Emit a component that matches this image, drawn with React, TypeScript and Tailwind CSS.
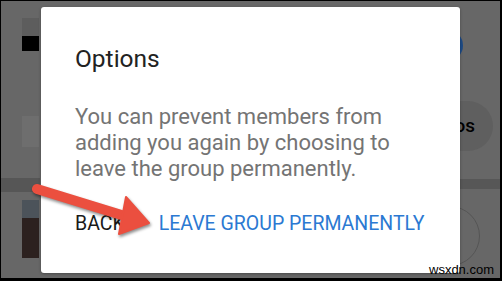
import React from "react";

const Arrow = () => {
  return (
    <svg
      className="absolute left-0 top-0 pointer-events-none"
      width={502}
      height={281}
      viewBox="0 0 502 281"
      style={{ filter: "drop-shadow(1px 2px 1.5px rgba(0,0,0,0.45))" }}
    >
      <line
        x1={37}
        y1={189}
        x2={128}
        y2={217}
        stroke="#eb4f3f"
        strokeWidth={10}
        strokeLinecap="round"
      />
      <polygon points="126,197 149,223 119,234" fill="#eb4f3f" strokeLinejoin="round" stroke="#eb4f3f" strokeWidth={2} />
    </svg>
  );
};

const App = () => {
  return (
    <div
      className="relative w-[502px] h-[281px] overflow-hidden bg-black p-[1px] pr-[2px] pb-[3px]"
      style={{ fontFamily: "Roboto, 'Noto Sans', Arial, sans-serif" }}
    >
      {/* dimmed app behind the dialog */}
      <div className="flex h-full w-full justify-between bg-[#676767]">
        <div className="flex w-[40px] flex-col">
          <div className="ml-[21px] mt-[17px] h-[18px] w-[17px] bg-[#5d5d5d]" />
          <div className="ml-[21px] h-[15px] w-[17px] bg-black" />
          <div className="ml-[21px] mt-[65px] h-[31px] w-[17px] bg-[#6e6e6e]" />
          <div className="mt-[31px] h-[14px] w-[39px] bg-[#565656]" />
          <div className="ml-[21px] mt-[8px] h-[18px] w-[17px] bg-[#4c535a]" />
          <div className="ml-[21px] h-[40px] w-[17px] bg-[#2c211f]" />
        </div>
        <div className="flex w-[80px] flex-col items-end">
          <div className="mr-[37px] mt-[29px] h-[31px] w-[31px] rounded-full bg-[#1d4a86]" />
          <div className="mr-[7px] mt-[40px] flex h-[50px] w-[73px] items-center justify-end rounded-full bg-[#5f5f5f] pr-[18px] text-[19px] font-medium text-black">
            os
          </div>
          <div className="mt-[28px] h-[10px] w-[41px] bg-[#575757]" />
          <div className="mr-[20px] mt-[17px] h-[60px] w-[60px] rounded-full border border-[#555]" />
        </div>
      </div>

      {/* dialog */}
      <div className="absolute left-[41px] top-[7px] flex h-[266px] w-[419px] flex-col rounded-[3px] bg-white pl-[34px] shadow-[0_1px_3px_rgba(0,0,0,0.3)]">
        <div className="mt-[37px] text-[24.5px] leading-[29px] text-[#222]">Options</div>
        <p className="mt-[31px] w-[350px] text-[22px] leading-[26px] text-[#747474]">
          You can prevent members from adding you again by choosing to leave the group permanently.
        </p>
        <div className="mt-[31px] flex items-center gap-[34px] text-[19.5px] leading-[22px]">
          <span className="text-[#1a1a1a]">BACK</span>
          <span className="text-[#2b79d2]">LEAVE GROUP PERMANENTLY</span>
        </div>
      </div>

      <Arrow />

      <div
        className="absolute left-[429px] top-[263px] text-[13px] leading-[13px] text-black"
        style={{ fontFamily: "'Liberation Sans', Arial, sans-serif" }}
      >
        wsxdn.com
      </div>
    </div>
  );
};

export default App;
